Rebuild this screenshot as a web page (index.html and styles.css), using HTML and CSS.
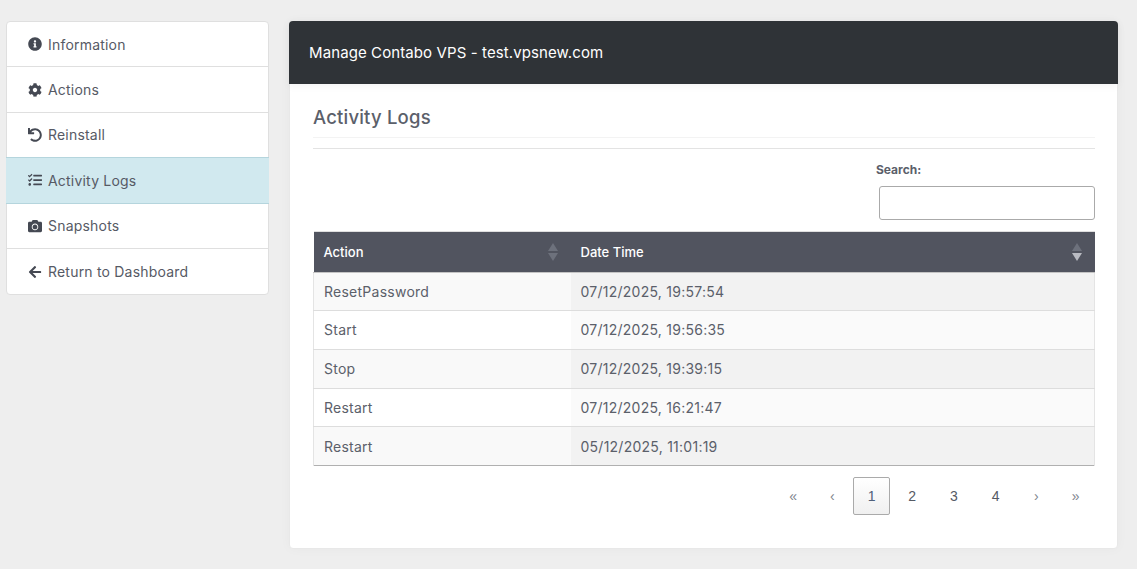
FILE: index.html
```html
<!DOCTYPE html>
<html lang="en">
<head>
    <meta charset="UTF-8">
    <meta name="viewport" content="width=device-width, initial-scale=1.0">
    <title>Manage Contabo VPS</title>
    <link rel="stylesheet" href="styles.css">
</head>
<body>
    <div class="layout">
        <div class="side-menu">
            <a class="side-item">
                <svg class="side-icon" viewBox="0 0 512 512"><path d="M256 8C119.043 8 8 119.083 8 256c0 137.997 111.043 248 248 248s248-110.003 248-248C504 119.083 392.957 8 256 8zm0 110c23.196 0 42 18.804 42 42s-18.804 42-42 42-42-18.804-42-42 18.804-42 42-42zm56 254c0 6.627-5.373 12-12 12h-88c-6.627 0-12-5.373-12-12v-24c0-6.627 5.373-12 12-12h12v-64h-12c-6.627 0-12-5.373-12-12v-24c0-6.627 5.373-12 12-12h64c6.627 0 12 5.373 12 12v100h12c6.627 0 12 5.373 12 12v24z"/></svg>
                Information
            </a>
            <a class="side-item">
                <svg class="side-icon" viewBox="0 0 512 512"><path d="M487.4 315.7l-42.6-24.6c4.3-23.2 4.3-47 0-70.2l42.6-24.6c4.9-2.8 7.1-8.6 5.5-14-11.1-35.6-30-67.8-54.7-94.6-3.8-4.1-10-5.1-14.8-2.3L380.8 110c-17.9-15.4-38.5-27.3-60.8-35.1V25.8c0-5.6-3.9-10.5-9.4-11.7-36.7-8.2-74.3-7.8-109.2 0-5.5 1.2-9.4 6.1-9.4 11.7V75c-22.2 7.9-42.8 19.8-60.8 35.1L88.7 85.5c-4.9-2.8-11-1.9-14.8 2.3-24.7 26.7-43.6 58.9-54.7 94.6-1.7 5.4.6 11.2 5.5 14L67.3 221c-4.3 23.2-4.3 47 0 70.2l-42.6 24.6c-4.9 2.8-7.1 8.6-5.5 14 11.1 35.6 30 67.8 54.7 94.6 3.8 4.1 10 5.1 14.8 2.3l42.6-24.6c17.9 15.4 38.5 27.3 60.8 35.1v49.2c0 5.6 3.9 10.5 9.4 11.7 36.7 8.2 74.3 7.8 109.2 0 5.5-1.2 9.4-6.1 9.4-11.7v-49.2c22.2-7.9 42.8-19.8 60.8-35.1l42.6 24.6c4.9 2.8 11 1.9 14.8-2.3 24.7-26.7 43.6-58.9 54.7-94.6 1.5-5.5-.7-11.3-5.6-14.1zM256 336c-44.1 0-80-35.9-80-80s35.9-80 80-80 80 35.9 80 80-35.9 80-80 80z"/></svg>
                Actions
            </a>
            <a class="side-item">
                <svg class="side-icon" viewBox="0 0 512 512"><path d="M212.333 224.333H12c-6.627 0-12-5.373-12-12V12C0 5.373 5.373 0 12 0h48c6.627 0 12 5.373 12 12v78.112C117.773 39.279 184.26 7.47 258.175 8.007c136.906.994 246.448 111.623 246.157 248.532C504.041 393.258 393.12 504 256.333 504c-64.089 0-122.496-24.313-166.51-64.215-5.099-4.622-5.334-12.554-.467-17.42l33.967-33.967c4.474-4.474 11.662-4.717 16.401-.525C170.76 415.336 211.58 432 256.333 432c97.268 0 176-78.716 176-176 0-97.267-78.716-176-176-176-58.496 0-110.28 28.476-142.274 72.333h98.274c6.627 0 12 5.373 12 12v48c0 6.627-5.373 12-12 12z"/></svg>
                Reinstall
            </a>
            <a class="side-item active">
                <svg class="side-icon" viewBox="0 0 512 512"><path d="M139.61 35.5a12 12 0 0 0-17 0L58.93 98.81l-22.7-22.12a12 12 0 0 0-17 0L3.53 92.41a12 12 0 0 0 0 17l47.59 47.4a12.78 12.78 0 0 0 17.61 0l15.59-15.62L156.52 69a12.09 12.09 0 0 0 .09-17zm0 159.19a12 12 0 0 0-17 0l-63.68 63.72-22.7-22.1a12 12 0 0 0-17 0L3.53 252a12 12 0 0 0 0 17L51 316.5a12.77 12.77 0 0 0 17.6 0l15.7-15.69 72.2-72.22a12 12 0 0 0 .09-16.9zM64 368c-26.49 0-48.59 21.5-48.59 48S37.53 464 64 464a48 48 0 0 0 0-96zm432 16H208a16 16 0 0 0-16 16v32a16 16 0 0 0 16 16h288a16 16 0 0 0 16-16v-32a16 16 0 0 0-16-16zm0-320H208a16 16 0 0 0-16 16v32a16 16 0 0 0 16 16h288a16 16 0 0 0 16-16V80a16 16 0 0 0-16-16zm0 160H208a16 16 0 0 0-16 16v32a16 16 0 0 0 16 16h288a16 16 0 0 0 16-16v-32a16 16 0 0 0-16-16z"/></svg>
                Activity Logs
            </a>
            <a class="side-item">
                <svg class="side-icon" viewBox="0 0 512 512"><path d="M512 144v288c0 26.5-21.5 48-48 48H48c-26.5 0-48-21.5-48-48V144c0-26.5 21.5-48 48-48h88l12.3-32.9c7-18.7 24.9-31.1 44.9-31.1h125.5c20 0 37.9 12.4 44.9 31.1L376 96h88c26.5 0 48 21.5 48 48zM376 288c0-66.2-53.8-120-120-120s-120 53.8-120 120 53.8 120 120 120 120-53.8 120-120zm-32 0c0 48.5-39.5 88-88 88s-88-39.5-88-88 39.5-88 88-88 88 39.5 88 88z"/></svg>
                Snapshots
            </a>
            <a class="side-item">
                <svg class="side-icon" viewBox="0 0 448 512"><path d="M257.5 445.1l-22.2 22.2c-9.4 9.4-24.6 9.4-33.9 0L7 273c-9.4-9.4-9.4-24.6 0-33.9L201.4 44.7c9.4-9.4 24.6-9.4 33.9 0l22.2 22.2c9.5 9.5 9.3 25-.4 34.3L136.6 216H424c13.3 0 24 10.7 24 24v32c0 13.3-10.7 24-24 24H136.6l120.5 114.8c9.8 9.3 10 24.8.4 34.3z"/></svg>
                Return to Dashboard
            </a>
        </div>

        <div class="main-card">
            <div class="main-header">Manage Contabo VPS - test.vpsnew.com</div>
            <div class="main-body">
                <h2 class="section-title">Activity Logs</h2>
                <div class="section-rule"></div>

                <div class="search-box">
                    <label class="search-label" for="log-search">Search:</label>
                    <input class="search-input" id="log-search" type="search">
                </div>

                <table class="log-table">
                    <thead>
                        <tr>
                            <th class="col-action">Action<span class="sort"><i class="up"></i><i class="down"></i></span></th>
                            <th>Date Time<span class="sort desc"><i class="up"></i><i class="down"></i></span></th>
                        </tr>
                    </thead>
                    <tbody>
                        <tr><td>ResetPassword</td><td class="sorted">07/12/2025, 19:57:54</td></tr>
                        <tr><td>Start</td><td class="sorted">07/12/2025, 19:56:35</td></tr>
                        <tr><td>Stop</td><td class="sorted">07/12/2025, 19:39:15</td></tr>
                        <tr><td>Restart</td><td class="sorted">07/12/2025, 16:21:47</td></tr>
                        <tr><td>Restart</td><td class="sorted">05/12/2025, 11:01:19</td></tr>
                    </tbody>
                </table>

                <div class="pager">
                    <a class="page-btn muted">«</a>
                    <a class="page-btn muted">‹</a>
                    <a class="page-btn current">1</a>
                    <a class="page-btn">2</a>
                    <a class="page-btn">3</a>
                    <a class="page-btn">4</a>
                    <a class="page-btn muted next">›</a>
                    <a class="page-btn muted">»</a>
                </div>
            </div>
        </div>
    </div>
</body>
</html>
```

FILE: styles.css
```css
body {
    font-family: Inter, sans-serif;
    font-size: 14px;
    letter-spacing: 0.2px;
    margin: 0;
    background: #eeeeee;
    color: #5b606a;
}
.layout {
    display: flex;
    align-items: flex-start;
    gap: 20px;
    padding: 21px 19px 21px 6px;
}
.side-menu {
    width: 263px;
    flex: none;
    box-sizing: border-box;
    background: white;
    border: 1px solid #dfdfdf;
    border-radius: 4px;
}
.side-item {
    display: flex;
    align-items: center;
    gap: 6px;
    height: 45.4px;
    box-sizing: border-box;
    padding-left: 21px;
    border-bottom: 1px solid #dfdfdf;
    color: #565a65;
}
.side-item:last-child {
    border-bottom: none;
}
.side-item.active {
    margin: -1px -1px 0;
    padding-left: 22px;
    height: 46.4px;
    background: #d1e9ef;
    border-top: 1px solid #b5d5dd;
    border-bottom: 1px solid #b5d5dd;
}
.side-icon {
    width: 14px;
    height: 14px;
    fill: #454953;
    flex: none;
}
.main-card {
    flex: 1;
    background: white;
    border-radius: 4px;
    border: 1px solid #e8e8e8;
    box-shadow: 0 0 12px rgba(0,0,0,0.03);
}
.main-header {
    margin: -1px -1px 0;
    background: #2f3337;
    color: white;
    font-size: 15px;
    letter-spacing: 0.1px;
    height: 63px;
    line-height: 63px;
    padding-left: 20px;
    border-radius: 4px 4px 0 0;
    box-shadow: 0 2px 8px rgba(0,0,0,0.05);
}
.main-body {
    padding: 21px 22px 33px 23px;
}
.section-title {
    margin: 0;
    font-size: 18.5px;
    font-weight: 500;
    line-height: 24px;
    padding-bottom: 8px;
    border-bottom: 1px solid #f3f3f3;
    color: #5b606a;
}
.section-rule {
    height: 1px;
    margin-top: 10px;
    background: #e3e3e3;
}
.search-box {
    display: flex;
    flex-direction: column;
    align-items: flex-end;
    margin-top: 14px;
}
.search-label {
    width: 219px;
    font-size: 12px;
    letter-spacing: 0;
    font-weight: 700;
    line-height: 14px;
    margin-bottom: 9px;
}
.search-input {
    width: 216px;
    height: 34px;
    box-sizing: border-box;
    border: 1px solid #aaaaaa;
    border-radius: 3px;
    background: white;
}
.log-table {
    width: 100%;
    margin-top: 11px;
    border-collapse: collapse;
    border-bottom: 1px solid #b0b0b0;
}
.log-table th {
    height: 41px;
    box-sizing: border-box;
    padding: 0 10px;
    text-align: left;
    font-size: 13px;
    font-weight: 500;
    letter-spacing: 0;
    color: white;
    background: #51545f;
    border-top: 1px solid #dfdfdf;
    border-bottom: 1px solid #c4c4c4;
    position: relative;
}
.col-action {
    width: 257px;
}
.log-table td {
    height: 38.75px;
    box-sizing: border-box;
    padding: 0 10px;
    letter-spacing: 0.25px;
    border-bottom: 1px solid #dddddd;
}
.log-table tr:first-child td {
    height: 38px;
}
.log-table td:first-child {
    border-left: 1px solid #e4e4e4;
}
.log-table td:last-child {
    border-right: 1px solid #e4e4e4;
}
.log-table tbody tr:nth-child(odd) td {
    background: #f9f9f9;
}
.log-table tbody tr:nth-child(odd) td.sorted {
    background: #f2f2f2;
}
.log-table tbody tr:nth-child(even) td.sorted {
    background: #fafafa;
}
.log-table tr:last-child td {
    border-bottom: none;
}
.sort {
    position: absolute;
    right: 13px;
    top: 50%;
    margin-top: -9px;
    display: flex;
    flex-direction: column;
    gap: 2px;
}
.sort i {
    width: 0;
    height: 0;
    border-left: 5px solid transparent;
    border-right: 5px solid transparent;
}
.sort .up {
    border-bottom: 8px solid #6d717c;
}
.sort .down {
    border-top: 8px solid #6d717c;
}
.sort.desc .down {
    border-top-color: #b9bbc2;
}
.pager {
    display: flex;
    justify-content: flex-end;
    gap: 4px;
    margin-top: 11px;
    padding-right: 1px;
}
.page-btn {
    box-sizing: border-box;
    height: 38px;
    line-height: 36px;
    padding: 0 14px;
    border: 1px solid transparent;
    border-radius: 2px;
    font-family: "Liberation Sans", Arial, sans-serif;
    letter-spacing: 0;
    color: #555a64;
}
.page-btn.muted {
    padding: 0 13.5px;
    color: #80858e;
}
.page-btn.next {
    margin-left: 1px;
}
.page-btn.current {
    padding: 0 13.6px;
    margin-right: -1px;
    border-color: #aaaaaa;
    background: linear-gradient(#ffffff, #f0f0f0);
    color: #50607a;
}
```
